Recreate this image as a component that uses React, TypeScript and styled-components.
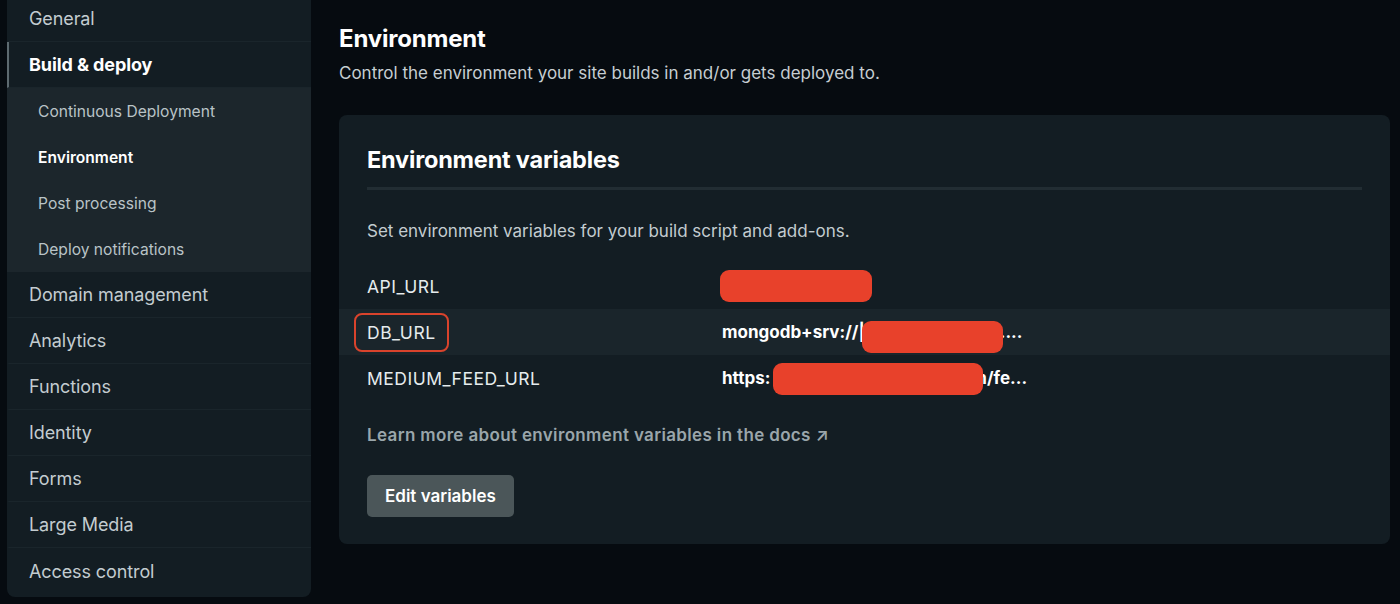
import React from "react";
import styled, { createGlobalStyle } from "styled-components";

const Global = createGlobalStyle`
  html, body { margin: 0; padding: 0; background: #060b10; }
  body { font-family: Inter, "Noto Sans", "Liberation Sans", sans-serif; -webkit-font-smoothing: antialiased; }
  * { box-sizing: border-box; }
`;

const Page = styled.div`
  display: flex;
  align-items: flex-start;
  width: 1400px;
  height: 604px;
  overflow: hidden;
  background: #060b10;
`;

const Sidebar = styled.nav`
  margin: -4px 0 0 7px;
  padding-bottom: 3px;
  width: 304px;
  flex: none;
  background: #131d23;
  border-radius: 0 0 8px 8px;
  display: flex;
  flex-direction: column;
  overflow: hidden;
`;

const NavItem = styled.div<{ $active?: boolean }>`
  height: 46px;
  display: flex;
  align-items: center;
  padding-left: 20px;
  font-size: 18px;
  font-weight: ${(p) => (p.$active ? 700 : 400)};
  color: ${(p) => (p.$active ? "#ffffff" : "#c3ccd0")};
  border-left: 2px solid ${(p) => (p.$active ? "#5d6a70" : "transparent")};
  border-bottom: 1px solid #1a252b;
  letter-spacing: -0.1px;
  &:last-child { border-bottom: none; }
`;

const SubNav = styled.div`
  background: #1c262c;
  display: flex;
  flex-direction: column;
`;

const SubItem = styled.div<{ $active?: boolean }>`
  height: 46px;
  display: flex;
  align-items: center;
  padding-left: 31px;
  font-size: 15.6px;
  font-weight: ${(p) => (p.$active ? 600 : 400)};
  color: ${(p) => (p.$active ? "#ffffff" : "#b9c3c7")};
`;

const Main = styled.main`
  flex: 1;
  padding: 22px 10px 0 28px;
`;

const Title = styled.h1`
  margin: 0;
  font-size: 24px;
  font-weight: 700;
  color: #ffffff;
  line-height: 34px;
  letter-spacing: -0.2px;
`;

const Subtitle = styled.p`
  margin: 0;
  font-size: 17px;
  line-height: 34px;
  color: #c6ced2;
`;

const Card = styled.section`
  margin-top: 25px;
  background: #131d23;
  border-radius: 8px;
  padding: 28px 0 26px;
  height: 429px;
`;

const CardHead = styled.h2`
  margin: 0 28px;
  font-size: 23.5px;
  font-weight: 700;
  color: #ffffff;
  line-height: 34px;
  padding-bottom: 10px;
  border-bottom: 3px solid #222d33;
  letter-spacing: -0.2px;
`;

const CardDesc = styled.p`
  margin: 26px 28px 17px;
  font-size: 17px;
  color: #c3ccd0;
  line-height: 30px;
`;

const VarRow = styled.div<{ $hl?: boolean }>`
  display: grid;
  grid-template-columns: 355px 1fr;
  align-items: center;
  height: 46px;
  padding-left: 28px;
  background: ${(p) => (p.$hl ? "#1a252b" : "transparent")};
`;

const Key = styled.span<{ $outlined?: boolean }>`
  justify-self: start;
  font-size: 17.5px;
  line-height: 21px;
  letter-spacing: 0.5px;
  color: #e6ecee;
  padding: 7px 11px;
  margin-left: -13px;
  border-radius: 8px;
  border: 2px solid ${(p) => (p.$outlined ? "#d9432c" : "transparent")};
`;

const Value = styled.span`
  position: relative;
  font-size: 17px;
  font-weight: 700;
  color: #ffffff;
  height: 32px;
  display: flex;
  align-items: center;
`;

const Redact = styled.span<{ $l: number; $w: number; $t: number }>`
  position: absolute;
  left: ${(p) => p.$l}px;
  top: ${(p) => p.$t}px;
  width: ${(p) => p.$w}px;
  height: 32px;
  background: #e8412b;
  border-radius: 9px;
`;

const Gap = styled.span<{ $w: number }>`
  display: inline-block;
  width: ${(p) => p.$w}px;
`;

const DocLink = styled.a`
  display: block;
  margin: 10px 28px 0;
  font-size: 17px;
  font-weight: 600;
  letter-spacing: 0.35px;
  color: #9aa6ab;
  text-decoration: none;
  line-height: 48px;
`;

const Button = styled.button`
  margin: 16px 28px 0;
  height: 42px;
  padding: 0 18px;
  border: none;
  border-radius: 5px;
  background: #4b5659;
  color: #ffffff;
  font-family: inherit;
  font-size: 17px;
  font-weight: 600;
`;

export default function App() {
  return (
    <>
      <Global />
      <Page>
        <Sidebar>
          <NavItem>General</NavItem>
          <NavItem $active>Build &amp; deploy</NavItem>
          <SubNav>
            <SubItem>Continuous Deployment</SubItem>
            <SubItem $active>Environment</SubItem>
            <SubItem>Post processing</SubItem>
            <SubItem>Deploy notifications</SubItem>
          </SubNav>
          <NavItem>Domain management</NavItem>
          <NavItem>Analytics</NavItem>
          <NavItem>Functions</NavItem>
          <NavItem>Identity</NavItem>
          <NavItem>Forms</NavItem>
          <NavItem>Large Media</NavItem>
          <NavItem>Access control</NavItem>
        </Sidebar>
        <Main>
          <Title>Environment</Title>
          <Subtitle>Control the environment your site builds in and/or gets deployed to.</Subtitle>
          <Card>
            <CardHead>Environment variables</CardHead>
            <CardDesc>Set environment variables for your build script and add-ons.</CardDesc>
            <VarRow>
              <Key>API_URL</Key>
              <Value>
                <Redact $l={-2} $w={152} $t={0} />
              </Value>
            </VarRow>
            <VarRow $hl>
              <Key $outlined>DB_URL</Key>
              <Value>
                mongodb+srv://|<Gap $w={135} />....
                <Redact $l={140} $w={141} $t={5} />
              </Value>
            </VarRow>
            <VarRow>
              <Key>MEDIUM_FEED_URL</Key>
              <Value>
                https:<Gap $w={206} />n/fe...
                <Redact $l={51} $w={210} $t={1} />
              </Value>
            </VarRow>
            <DocLink>Learn more about environment variables in the docs ↗</DocLink>
            <Button>Edit variables</Button>
          </Card>
        </Main>
      </Page>
    </>
  );
}
